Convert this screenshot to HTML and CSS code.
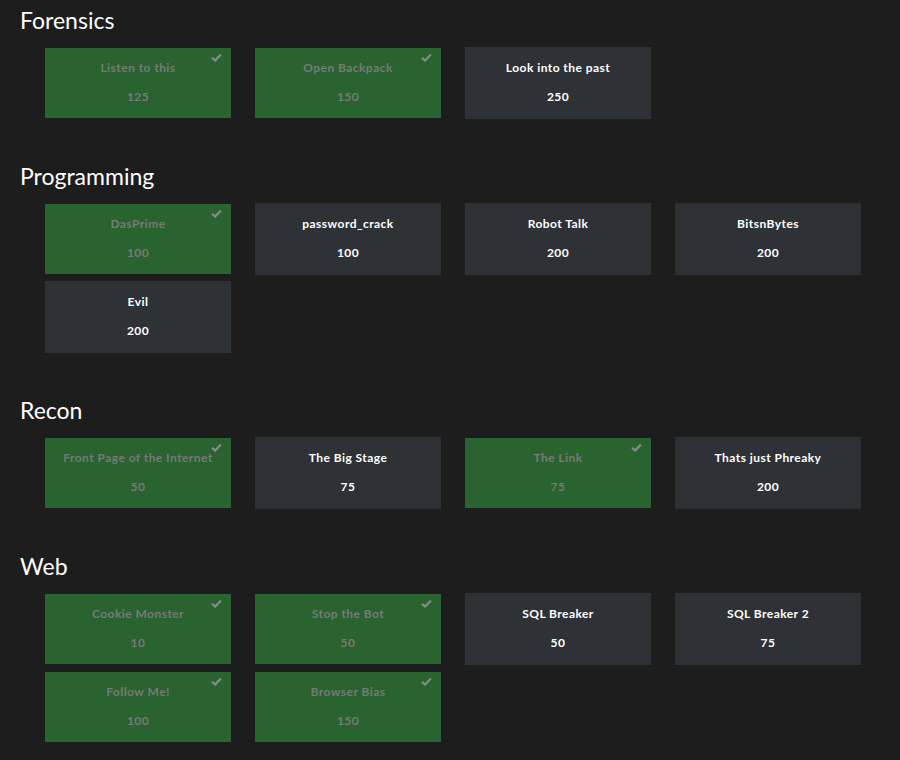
FILE: index.html
```html
<!DOCTYPE html>
<html>
<head>
<meta charset="utf-8">
<link rel="stylesheet" href="styles.css">
</head>
<body>
<main class="board">
  <section class="category">
    <h2 class="category-title">Forensics</h2>
    <div class="cards">
      <div class="card solved"><span class="name">Listen to this</span><span class="points">125</span><svg class="check" viewBox="0 0 10 8"><path d="M1 4.3 L3.8 6.8 L9 1.3"/></svg></div>
      <div class="card solved"><span class="name">Open Backpack</span><span class="points">150</span><svg class="check" viewBox="0 0 10 8"><path d="M1 4.3 L3.8 6.8 L9 1.3"/></svg></div>
      <div class="card"><span class="name">Look into the past</span><span class="points">250</span></div>
    </div>
  </section>
  <section class="category">
    <h2 class="category-title">Programming</h2>
    <div class="cards">
      <div class="card solved"><span class="name">DasPrime</span><span class="points">100</span><svg class="check" viewBox="0 0 10 8"><path d="M1 4.3 L3.8 6.8 L9 1.3"/></svg></div>
      <div class="card"><span class="name">password_crack</span><span class="points">100</span></div>
      <div class="card"><span class="name">Robot Talk</span><span class="points">200</span></div>
      <div class="card"><span class="name">BitsnBytes</span><span class="points">200</span></div>
      <div class="card"><span class="name">Evil</span><span class="points">200</span></div>
    </div>
  </section>
  <section class="category">
    <h2 class="category-title">Recon</h2>
    <div class="cards">
      <div class="card solved"><span class="name">Front Page of the Internet</span><span class="points">50</span><svg class="check" viewBox="0 0 10 8"><path d="M1 4.3 L3.8 6.8 L9 1.3"/></svg></div>
      <div class="card"><span class="name">The Big Stage</span><span class="points">75</span></div>
      <div class="card solved"><span class="name">The Link</span><span class="points">75</span><svg class="check" viewBox="0 0 10 8"><path d="M1 4.3 L3.8 6.8 L9 1.3"/></svg></div>
      <div class="card"><span class="name">Thats just Phreaky</span><span class="points">200</span></div>
    </div>
  </section>
  <section class="category">
    <h2 class="category-title">Web</h2>
    <div class="cards">
      <div class="card solved"><span class="name">Cookie Monster</span><span class="points">10</span><svg class="check" viewBox="0 0 10 8"><path d="M1 4.3 L3.8 6.8 L9 1.3"/></svg></div>
      <div class="card solved"><span class="name">Stop the Bot</span><span class="points">50</span><svg class="check" viewBox="0 0 10 8"><path d="M1 4.3 L3.8 6.8 L9 1.3"/></svg></div>
      <div class="card"><span class="name">SQL Breaker</span><span class="points">50</span></div>
      <div class="card"><span class="name">SQL Breaker 2</span><span class="points">75</span></div>
      <div class="card solved"><span class="name">Follow Me!</span><span class="points">100</span><svg class="check" viewBox="0 0 10 8"><path d="M1 4.3 L3.8 6.8 L9 1.3"/></svg></div>
      <div class="card solved"><span class="name">Browser Bias</span><span class="points">150</span><svg class="check" viewBox="0 0 10 8"><path d="M1 4.3 L3.8 6.8 L9 1.3"/></svg></div>
    </div>
  </section>
</main>
</body>
</html>
```

FILE: styles.css
```css
html, body {
  margin: 0;
  padding: 0;
  background: #1d1d1d;
}

body {
  font-family: Lato, "Open Sans", sans-serif;
  color: #ffffff;
}

.board {
  padding: 6px 0 0 20px;
}

.category {
  margin-bottom: 43px;
}

.category-title {
  margin: 0;
  font-size: 23px;
  line-height: 28px;
  font-weight: 400;
  color: #ffffff;
}

.cards {
  display: grid;
  grid-template-columns: repeat(4, 186px);
  column-gap: 24px;
  row-gap: 6px;
  margin: 13px 0 0 25px;
}

.card {
  position: relative;
  height: 72px;
  box-sizing: border-box;
  padding-top: 13px;
  display: flex;
  flex-direction: column;
  align-items: center;
  background: #2e3236;
  font-weight: 700;
  font-size: 12px;
  line-height: 16px;
  letter-spacing: 0.45px;
  color: #ffffff;
}

.card .points {
  margin-top: 13px;
}

.card.solved {
  background: #29632f;
  color: #777a77;
  box-shadow: inset 0 1px 0 #1d1d1d, inset 0 -1px 0 #1d1d1d;
}

.check {
  position: absolute;
  top: 6px;
  right: 9px;
  width: 11px;
  height: 9px;
  fill: none;
  stroke: #888b88;
  stroke-width: 2;
}
```
